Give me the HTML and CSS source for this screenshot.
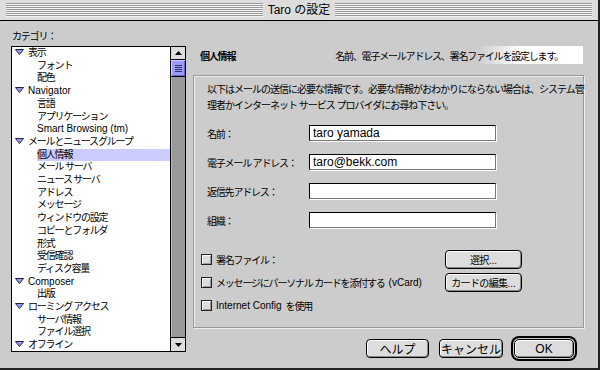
FILE: index.html
```html
<!DOCTYPE html>
<html lang="ja">
<head>
    <meta charset="UTF-8">
    <meta name="viewport" content="width=device-width, initial-scale=1.0">
    <title>Taro の設定</title>
    <link rel="stylesheet" href="styles.css">
</head>
<body>
<div class="window">
    <div class="titlebar"><span class="title">Taro の設定</span></div>
    <div class="content">
        <div class="sidebar">
            <div class="cat-label">カテゴリ：</div>
            <div class="tree-box">
                <ul class="tree">
                    <li class="parent"><svg class="twisty" viewBox="0 0 9 6"><path d="M.5.5h8L4.5 5.5z"/></svg>表示</li>
                    <li class="child">フォント</li>
                    <li class="child">配色</li>
                    <li class="parent"><svg class="twisty" viewBox="0 0 9 6"><path d="M.5.5h8L4.5 5.5z"/></svg><span class="lat">Navigator</span></li>
                    <li class="child">言語</li>
                    <li class="child">アプリケーション</li>
                    <li class="child"><span class="lat">Smart Browsing (tm)</span></li>
                    <li class="parent"><svg class="twisty" viewBox="0 0 9 6"><path d="M.5.5h8L4.5 5.5z"/></svg>メールとニュースグループ</li>
                    <li class="child selected"><span>個人情報</span></li>
                    <li class="child">メール サーバ</li>
                    <li class="child">ニュース サーバ</li>
                    <li class="child">アドレス</li>
                    <li class="child">メッセージ</li>
                    <li class="child">ウィンドウの設定</li>
                    <li class="child">コピーとフォルダ</li>
                    <li class="child">形式</li>
                    <li class="child">受信確認</li>
                    <li class="child">ディスク容量</li>
                    <li class="parent"><svg class="twisty" viewBox="0 0 9 6"><path d="M.5.5h8L4.5 5.5z"/></svg><span class="lat">Composer</span></li>
                    <li class="child">出版</li>
                    <li class="parent"><svg class="twisty" viewBox="0 0 9 6"><path d="M.5.5h8L4.5 5.5z"/></svg>ローミング アクセス</li>
                    <li class="child">サーバ情報</li>
                    <li class="child">ファイル選択</li>
                    <li class="parent"><svg class="twisty" viewBox="0 0 9 6"><path d="M.5.5h8L4.5 5.5z"/></svg>オフライン</li>
                </ul>
                <div class="scrollbar">
                    <div class="arrow"><svg width="7" height="4" viewBox="0 0 7 4"><path d="M0 4h7L3.5 0z"/></svg></div>
                    <div class="thumb"></div>
                    <div class="track"></div>
                    <div class="arrow down"><svg width="7" height="4" viewBox="0 0 7 4"><path d="M0 0h7L3.5 4z"/></svg></div>
                </div>
            </div>
        </div>
        <div class="main">
            <div class="pane-head">
                <b>個人情報</b>
                <span>名前、電子メールアドレス、署名ファイルを設定します。</span>
            </div>
            <div class="group">
                <p class="desc">以下はメールの送信に必要な情報です。必要な情報がおわかりにならない場合は、システム管<br>理者かインターネット サービス プロバイダにお尋ね下さい。</p>
                <div class="fields">
                    <label>名前：</label><input class="field" value="taro yamada">
                    <label>電子メール アドレス：</label><input class="field" value="taro@bekk.com">
                    <label>返信先アドレス：</label><input class="field" value="">
                    <label>組織：</label><input class="field" value="">
                </div>
                <div class="options">
                    <div class="opt"><span class="check"></span>署名ファイル：</div>
                    <button class="btn">選択<span class="lat">...</span></button>
                    <div class="opt"><span class="check"></span>メッセージにパーソナル カードを添付する<span class="lat">(vCard)</span></div>
                    <button class="btn">カードの編集<span class="lat">...</span></button>
                    <div class="opt"><span class="check"></span><span class="lat">Internet Config</span> を使用</div>
                </div>
            </div>
            <div class="actions">
                <button class="btn help">ヘルプ</button>
                <button class="btn cancel">キャンセル</button>
                <button class="btn ok">OK</button>
            </div>
        </div>
    </div>
</div>
</body>
</html>
```

FILE: styles.css
```css
*{
    box-sizing: border-box;
}
body{
    margin: 0;
    background: #ccc;
    color: #000;
    font-family: "Liberation Sans", "Noto Sans CJK JP", sans-serif;
    font-size: 10px;
    letter-spacing: -1.2px;
}
.lat{
    letter-spacing: 0;
}
.window{
    width: 600px;
    height: 370px;
    border-right: 2px solid #222;
    border-bottom: 2px solid #222;
    background: #ccc;
    display: flex;
    flex-direction: column;
}

/* title bar */
.titlebar{
    height: 21px;
    flex: none;
    padding: 3px 6px;
    border-bottom: 1px solid #000;
    background: repeating-linear-gradient(#999 0 1px, #f4f4f4 1px 2px) content-box, #ddd;
    display: flex;
    justify-content: center;
}
.title{
    background: #ddd;
    padding: 0 5px;
    font-size: 12px;
    line-height: 14px;
    letter-spacing: 0;
}

.content{
    flex: 1;
    display: flex;
}

/* category tree */
.sidebar{
    flex: none;
    padding: 10px 0 0 11px;
}
.cat-label{
    line-height: 12px;
    margin-bottom: 3px;
    padding-left: 1px;
}
.tree-box{
    width: 175px;
    height: 306px;
    border: 1px solid #000;
    background: #fff;
    display: flex;
}
.tree{
    flex: 1;
    margin: 0;
    padding: 0;
    list-style: none;
    line-height: 12.7px;
    white-space: nowrap;
    overflow: hidden;
}
.parent{
    padding-left: 3px;
}
.twisty{
    width: 9px;
    height: 6px;
    margin-right: 4px;
    vertical-align: 1px;
    fill: #99f;
    stroke: #224;
}
.child{
    padding-left: 25px;
}
.selected span{
    display: block;
    background: #ccf;
}
.scrollbar{
    width: 15px;
    border-left: 1px solid #000;
    background: #999;
    display: flex;
    flex-direction: column;
}
.arrow{
    height: 13px;
    border-bottom: 1px solid #000;
    background: #ddd;
    display: flex;
    align-items: center;
    justify-content: center;
}
.arrow.down{
    height: 14px;
    border-bottom: 0;
    border-top: 1px solid #000;
}
.thumb{
    height: 17px;
    border-bottom: 1px solid #000;
    background: #99f;
    box-shadow: inset 1px 1px 0 #ccf, inset -1px -1px 0 #66c;
    display: flex;
    align-items: center;
    justify-content: center;
}
.thumb::after{
    content: "";
    width: 7px;
    height: 7px;
    background: repeating-linear-gradient(#336 0 1px, transparent 1px 2px);
}
.track{
    flex: 1;
    box-shadow: inset 1px 0 0 #bbb;
}

/* preference pane */
.main{
    width: 391px;
    margin-left: 7px;
    padding-top: 25px;
}
.pane-head{
    width: 390px;
    height: 18px;
    padding: 0 20px 0 7px;
    display: flex;
    align-items: center;
    justify-content: space-between;
    background: linear-gradient(to right, #ccc 73%, #fff 84%);
}
.group{
    margin-top: 11px;
    height: 253px;
    border: 1px solid #999;
    box-shadow: inset 1px 1px 0 #eee, 1px 1px 0 #eee;
}
.desc{
    margin: 0;
    padding: 6px 0 0 13px;
    line-height: 16px;
    letter-spacing: -1px;
    white-space: nowrap;
}
.fields{
    margin-top: 11px;
    padding-left: 13px;
    display: grid;
    grid-template-columns: 102px 187px;
    grid-auto-rows: 16px;
    row-gap: 13px;
    align-items: center;
}
.field{
    width: 187px;
    height: 16px;
    padding: 0 3px;
    border: 1px solid;
    border-color: #000 #777 #777 #000;
    box-shadow: 1px 1px 0 #fff;
    background: #fff;
    font-family: "Liberation Sans", sans-serif;
    font-size: 12px;
    letter-spacing: 0;
    outline: none;
}
.options{
    margin-top: 20px;
    padding-left: 7px;
    display: grid;
    grid-template-columns: 244px 77px;
    grid-auto-rows: 23px;
    align-items: center;
}
.opt{
    display: flex;
    align-items: center;
    gap: 4px;
    white-space: nowrap;
}
.check{
    width: 11px;
    height: 11px;
    border: 1px solid #222;
    background: #ddd;
    box-shadow: inset 1px 1px 0 #fff, inset -1px -1px 0 #999;
}
.btn{
    height: 19px;
    padding: 0;
    border: 1px solid #000;
    border-radius: 4px;
    background: #ddd;
    box-shadow: inset 1px 1px 0 #fff, inset -1px -1px 0 #888;
    color: #000;
    font: inherit;
    letter-spacing: -0.6px;
}
.actions{
    margin-top: 11px;
    padding-right: 10px;
    display: flex;
    justify-content: flex-end;
    gap: 10px;
}
.actions .btn{
    font-size: 12px;
    letter-spacing: 0;
}
.help{
    width: 63px;
}
.cancel{
    width: 64px;
}
.ok{
    width: 60px;
    margin-left: 1px;
    border-radius: 5px;
    box-shadow: inset 1px 1px 0 #fff, inset -1px -1px 0 #888, 0 0 0 1px #ccc, 0 0 0 3px #000;
}
```
